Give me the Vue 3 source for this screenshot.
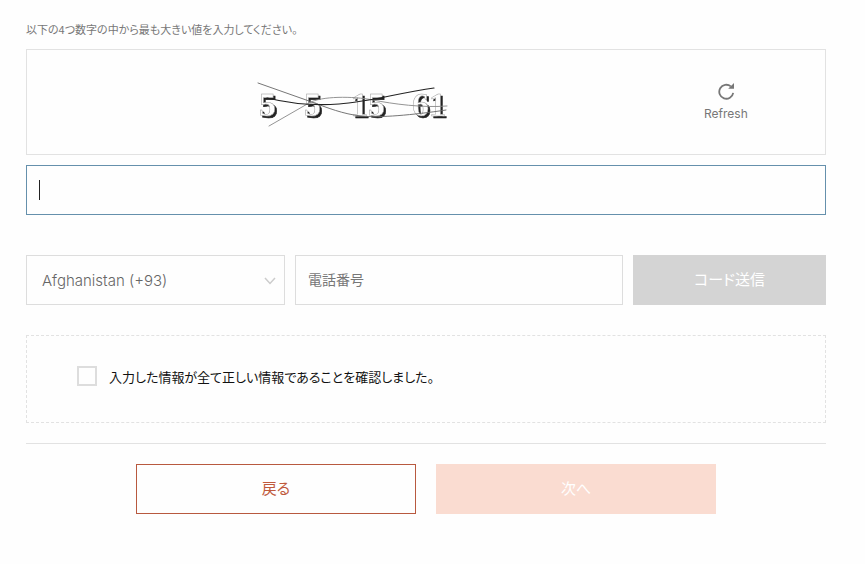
<script setup>
import { ref } from 'vue'

const answer = ref('')
const phone = ref('')
const country = ref('93')
const confirmed = ref(false)
</script>

<template>
  <form class="page" @submit.prevent>
    <label class="prompt" for="answer">以下の4つ数字の中から最も大きい値を入力してください。</label>

    <div class="captcha">
      <svg class="captcha-image" viewBox="0 0 200 60" width="200" height="60" role="img" aria-label="5 5 15 61">
        <text class="digits" y="44" x="6 51 98 115 159 176">551561</text>
        <g fill="none" stroke-linecap="round">
          <path d="M5 11 L56 29 C75 36 90 42 108 44 S160 43 193 38" stroke="#666" stroke-width="0.9" />
          <path d="M16 54 L56 31 C68 24 100 24 120 28 S170 36 194 34" stroke="#888" stroke-width="0.9" />
          <path d="M14 26 C35 31 62 34 86 32 C116 30 145 21 181 16" stroke="#222" stroke-width="1.2" />
        </g>
      </svg>
      <button class="refresh" type="button">
        <svg viewBox="0 0 18 18" width="18" height="18" aria-hidden="true">
          <path d="M13.8 4.4 A7 7 0 1 0 16.2 10.8" fill="none" stroke="#777" stroke-width="1.8" />
          <path d="M17 1 V6.8 H11.2 Z" fill="#777" />
        </svg>
        <span>Refresh</span>
      </button>
    </div>

    <div class="answer">
      <input id="answer" v-model="answer" class="field focused" :class="{ empty: !answer }" type="text" autocomplete="off" />
      <span v-if="!answer" class="caret" aria-hidden="true"></span>
    </div>

    <div class="phone-row">
      <div class="select-box">
        <select v-model="country" class="field" aria-label="Country">
          <option value="93">Afghanistan (+93)</option>
        </select>
        <svg class="chevron" viewBox="0 0 12 8" width="12" height="8" aria-hidden="true">
          <path d="M1 1 L6 6.5 L11 1" fill="none" stroke="#ccc" stroke-width="1.5" />
        </svg>
      </div>
      <input v-model="phone" class="field" type="tel" placeholder="電話番号" aria-label="電話番号" />
      <button class="send" type="button" disabled>コード送信</button>
    </div>

    <label class="confirm">
      <input v-model="confirmed" type="checkbox" />
      <span>入力した情報が全て正しい情報であることを確認しました。</span>
    </label>

    <div class="actions">
      <button class="back" type="button">戻る</button>
      <button class="next" type="submit" disabled>次へ</button>
    </div>
  </form>
</template>

<style>
body {
  background: #fefefe;
}
</style>

<style scoped>
.page,
.page * {
  box-sizing: border-box;
}
.page {
  padding: 20px 39px 50px 26px;
  font-family: "Noto Sans CJK JP", sans-serif;
  font-size: 14px;
  font-feature-settings: "palt";
  color: #111;
}
input,
select,
button {
  font: inherit;
  font-feature-settings: inherit;
  border-radius: 0;
}
.prompt {
  display: block;
  margin-bottom: 10px;
  font-size: 11px;
  line-height: 19px;
  color: #777;
}
.captcha {
  display: grid;
  grid-template-columns: 650fr 94fr;
  align-items: center;
  height: 106px;
  padding-right: 52px;
  border: 1px solid #e2e2e2;
}
.captcha-image {
  justify-self: center;
}
.digits {
  font-family: "Liberation Serif", serif;
  font-size: 34px;
  font-weight: 700;
  fill: #fefefe;
  stroke: #999;
  stroke-width: 0.5px;
  filter: drop-shadow(2px 2px 0 #222);
}
.refresh {
  display: flex;
  flex-direction: column;
  align-items: center;
  gap: 4px;
  padding: 2px 0 0;
  border: 0;
  background: none;
  font-family: Inter, sans-serif;
  font-size: 12px;
  line-height: 20px;
  color: #777;
}
.answer {
  position: relative;
  margin: 10px 0 40px;
}
.field {
  display: block;
  width: 100%;
  height: 50px;
  padding: 0 12px 2px;
  border: 1px solid #ddd;
  outline: 0;
  background: #fefefe;
  color: #666;
}
.focused {
  border-color: #6590ac;
}
.empty {
  caret-color: transparent;
}
.caret {
  position: absolute;
  top: 15px;
  left: 13px;
  width: 1px;
  height: 20px;
  background: #222;
}
.phone-row {
  display: grid;
  grid-template-columns: 259fr 328fr 193fr;
  gap: 10px;
}
.select-box {
  position: relative;
}
select.field {
  appearance: none;
  padding: 0 36px 0 15px;
  font-family: Inter, sans-serif;
  font-size: 15px;
  font-weight: 300;
}
.chevron {
  position: absolute;
  top: 22px;
  right: 9px;
  pointer-events: none;
}
.field::placeholder {
  color: #777;
  opacity: 1;
}
.send,
.back,
.next {
  height: 50px;
  padding: 0 0 3px;
  border: 0;
  font-size: 15px;
}
.send {
  background: #d4d4d4;
  color: #fff;
}
.confirm {
  display: flex;
  align-items: center;
  gap: 12px;
  height: 88px;
  margin-top: 30px;
  padding: 0 50px 6px;
  border: 1px dashed #e2e2e2;
  font-size: 13px;
}
.confirm input {
  appearance: none;
  width: 20px;
  height: 20px;
  margin: 0;
  border: 2px solid #ddd;
}
.confirm input:checked {
  background: #cf6743;
}
.actions {
  display: grid;
  grid-template-columns: 280px 280px;
  justify-content: center;
  gap: 20px;
  margin-top: 20px;
  padding-top: 20px;
  border-top: 1px solid #e2e2e2;
}
.back {
  border: 1px solid #b8593f;
  background: #fefefe;
  color: #c05a3c;
}
.next {
  background: #fadcd1;
  color: #fff;
}
</style>
